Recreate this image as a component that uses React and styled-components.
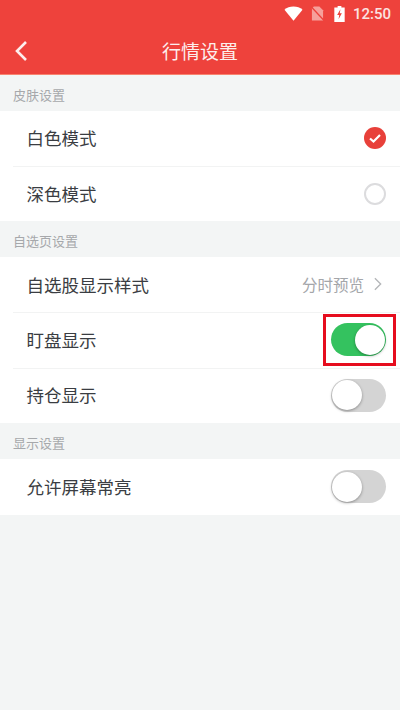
import React from "react";
import styled, { createGlobalStyle } from "styled-components";

const GlobalStyle = createGlobalStyle`
  html, body {
    margin: 0;
    padding: 0;
    background: #f3f5f5;
  }
  * {
    box-sizing: border-box;
  }
`;

const Page = styled.div`
  width: 400px;
  height: 710px;
  overflow: hidden;
  background: #f3f5f5;
  font-family: "Noto Sans CJK SC", "Liberation Sans", sans-serif;
`;

const Header = styled.header`
  height: 75px;
  background: #ee423c;
  border-bottom: 1px solid #f8836f;
  color: #fff;
`;

const StatusBar = styled.div`
  height: 27px;
  display: flex;
  align-items: center;
  justify-content: flex-end;
  padding-right: 9px;
`;

const StatusIcon = styled.svg`
  display: block;
  margin-right: ${(p) => p.$gap}px;
`;

const Clock = styled.span`
  font-family: Roboto, "Liberation Sans", sans-serif;
  font-size: 15px;
  font-weight: 500;
  color: #fbe3e1;
`;

const NavBar = styled.div`
  position: relative;
  height: 47px;
  display: flex;
  align-items: center;
  justify-content: center;
`;

const BackIcon = styled.svg`
  position: absolute;
  left: 14px;
  top: 13px;
`;

const Title = styled.h1`
  margin: 0;
  font-size: 19px;
  font-weight: 400;
  line-height: 47px;
  color: #fdeeec;
`;

const SectionLabel = styled.div`
  height: 35.7px;
  padding-left: 13px;
  font-size: 13px;
  line-height: 39px;
  color: #a6a8ab;
`;

const Group = styled.section`
  background: #fff;
`;

const Row = styled.div`
  position: relative;
  height: ${(p) => p.$height || 55.3}px;
  padding: 0 14px 0 26.5px;
  display: flex;
  align-items: center;
  justify-content: space-between;

  & + &::before {
    content: "";
    position: absolute;
    left: 13px;
    right: 0;
    top: 0;
    height: 1px;
    background: #f2f3f3;
  }
`;

const RowLabel = styled.span`
  margin-top: -1px;
  font-size: 17.5px;
  color: #3a3d42;
`;

const Radio = styled.span`
  width: 22px;
  height: 22px;
  border-radius: 50%;
  border: 2px solid #dcdcde;
  background: #fff;
`;

const CheckedRadio = styled.svg`
  display: block;
`;

const Preview = styled.span`
  display: flex;
  align-items: center;
  gap: 10px;
  margin-top: -1px;
  padding-right: 4px;
  font-size: 15.5px;
  color: #a4a6aa;
`;

const Track = styled.span`
  position: relative;
  display: block;
  width: 55px;
  height: 33px;
  border-radius: 17px;
  background: ${(p) => (p.$on ? "#34c25f" : "#d4d4d4")};
`;

const Knob = styled.span`
  position: absolute;
  top: 1.5px;
  left: ${(p) => (p.$on ? "23.5px" : "1px")};
  width: 30px;
  height: 30px;
  border-radius: 50%;
  background: #fff;
  box-shadow: 0 1px 3px rgba(0, 0, 0, 0.35);
`;

const Highlight = styled.span`
  position: absolute;
  left: 323px;
  top: 2px;
  width: 73px;
  height: 52px;
  border: 3px solid #e60d1e;
  pointer-events: none;
`;

const Toggle = ({ on }) => (
  <Track $on={on}>
    <Knob $on={on} />
  </Track>
);

const App = () => {
  return (
    <Page>
      <GlobalStyle />
      <Header>
        <StatusBar>
          <StatusIcon $gap={8} width="19" height="15" viewBox="0 0 20 15">
            <path d="M10 15 L0.5 3.6 C3 1.4 6.3 0.2 10 0.2 C13.7 0.2 17 1.4 19.5 3.6 Z" fill="#fff" />
          </StatusIcon>
          <StatusIcon $gap={10} width="13" height="15" viewBox="0 0 14 16">
            <path d="M3 0.5 H9 L13 4.5 V15.5 H1 V2.5 Z" fill="#f6a09b" />
            <path d="M0.5 1 L13.5 15" stroke="#ee423c" strokeWidth="1.4" />
          </StatusIcon>
          <StatusIcon $gap={8} width="11" height="16" viewBox="0 0 11 17">
            <path d="M3.5 0 H7.5 V1.5 H11 V17 H0 V1.5 H3.5 Z" fill="#fff" />
            <path d="M6.5 3.5 L3 9.5 H5.2 L4.5 14 L8 7.8 H5.8 Z" fill="#ee423c" />
          </StatusIcon>
          <Clock>12:50</Clock>
        </StatusBar>
        <NavBar>
          <BackIcon width="14" height="22" viewBox="0 0 14 22">
            <path d="M12 2 L3 11 L12 20" fill="none" stroke="#fdeeec" strokeWidth="2.6" />
          </BackIcon>
          <Title>行情设置</Title>
        </NavBar>
      </Header>

      <SectionLabel>皮肤设置</SectionLabel>
      <Group>
        <Row>
          <RowLabel>白色模式</RowLabel>
          <CheckedRadio width="22" height="22" viewBox="0 0 22 22">
            <circle cx="11" cy="11" r="11" fill="#e8403a" />
            <path d="M6 11.5 L9.5 14.5 L16 8" fill="none" stroke="#fff" strokeWidth="2.2" />
          </CheckedRadio>
        </Row>
        <Row>
          <RowLabel>深色模式</RowLabel>
          <Radio />
        </Row>
      </Group>

      <SectionLabel>自选页设置</SectionLabel>
      <Group>
        <Row>
          <RowLabel>自选股显示样式</RowLabel>
          <Preview>
            分时预览
            <svg width="8" height="14" viewBox="0 0 9 15">
              <path d="M1 1 L7.5 7.5 L1 14" fill="none" stroke="#b4b6b9" strokeWidth="1.5" />
            </svg>
          </Preview>
        </Row>
        <Row>
          <RowLabel>盯盘显示</RowLabel>
          <Toggle on />
          <Highlight />
        </Row>
        <Row>
          <RowLabel>持仓显示</RowLabel>
          <Toggle />
        </Row>
      </Group>

      <SectionLabel>显示设置</SectionLabel>
      <Group>
        <Row $height={56}>
          <RowLabel>允许屏幕常亮</RowLabel>
          <Toggle />
        </Row>
      </Group>
    </Page>
  );
};

export default App;
